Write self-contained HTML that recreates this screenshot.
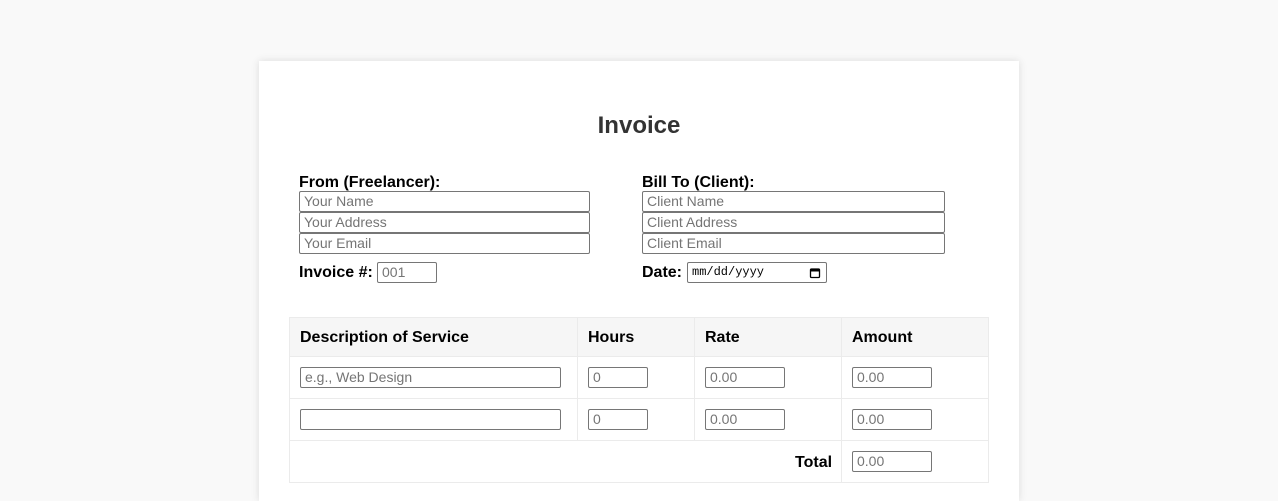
<!DOCTYPE html>
<html><head><style>
*{box-sizing:border-box;margin:0;padding:0}
html,body{width:1278px;height:501px;overflow:hidden}
body{background:#f9f9f9;font-family:"Liberation Sans",Arial,sans-serif;position:relative}
.card{position:absolute;left:259px;top:61px;width:760px;height:440px;background:#fff;box-shadow:0 0 8px rgba(0,0,0,0.12)}
.a{position:absolute}
h1{position:absolute;left:0;width:1278px;top:112px;text-align:center;font-size:24px;font-weight:bold;color:#333;line-height:28px}
.lbl{position:absolute;font-weight:bold;font-size:16px;color:#000;line-height:18px}
.in{position:absolute;height:21px;border:1px solid #767676;border-radius:2px;background:#fff;font-size:14px;color:#757575;padding-left:4px;line-height:19px;font-family:"Liberation Sans",Arial,sans-serif}
.cell{position:absolute;border:1px solid #ebebeb}
.th{position:absolute;font-weight:bold;font-size:16px;line-height:18px}
</style></head><body>
<div class="card"></div>
<h1>Invoice</h1>
<div class="lbl" style="left:299px;top:174px">From (Freelancer):</div>
<div class="lbl" style="left:642px;top:174px">Bill To (Client):</div>
<div class="in" style="left:299px;top:191px;width:291px">Your Name</div>
<div class="in" style="left:299px;top:212px;width:291px">Your Address</div>
<div class="in" style="left:299px;top:233px;width:291px">Your Email</div>
<div class="in" style="left:642px;top:191px;width:303px">Client Name</div>
<div class="in" style="left:642px;top:212px;width:303px">Client Address</div>
<div class="in" style="left:642px;top:233px;width:303px">Client Email</div>
<div class="lbl" style="left:299px;top:264px">Invoice #:</div>
<div class="in" style="left:377px;top:262px;width:60px">001</div>
<div class="lbl" style="left:642px;top:264px">Date:</div>
<div class="in" style="left:687px;top:262px;width:140px;color:#000;font-family:'Liberation Mono',monospace;font-size:12px">mm/dd/yyyy
<svg class="a" style="left:121px;top:4px" width="12" height="12" viewBox="0 0 12 12"><rect x="1.5" y="2" width="9" height="8.5" rx="1" fill="none" stroke="#000" stroke-width="1.3"/><rect x="1.5" y="2" width="9" height="2.5" fill="#000"/></svg></div>

<div class="cell" style="left:289px;top:317px;width:700px;height:40px;background:#f6f6f6"></div>
<div class="cell" style="left:289px;top:356px;width:700px;height:43px"></div>
<div class="cell" style="left:289px;top:398px;width:700px;height:43px"></div>
<div class="cell" style="left:289px;top:440px;width:700px;height:43px"></div>
<div class="a" style="left:577px;top:317px;width:1px;height:124px;background:#ebebeb"></div>
<div class="a" style="left:694px;top:317px;width:1px;height:124px;background:#ebebeb"></div>
<div class="a" style="left:841px;top:317px;width:1px;height:166px;background:#ebebeb"></div>
<div class="th" style="left:300px;top:329px">Description of Service</div>
<div class="th" style="left:588px;top:329px">Hours</div>
<div class="th" style="left:705px;top:329px">Rate</div>
<div class="th" style="left:852px;top:329px">Amount</div>
<div class="in" style="left:300px;top:367px;width:261px">e.g., Web Design</div>
<div class="in" style="left:588px;top:367px;width:60px">0</div>
<div class="in" style="left:705px;top:367px;width:80px">0.00</div>
<div class="in" style="left:852px;top:367px;width:80px">0.00</div>
<div class="in" style="left:300px;top:409px;width:261px"></div>
<div class="in" style="left:588px;top:409px;width:60px">0</div>
<div class="in" style="left:705px;top:409px;width:80px">0.00</div>
<div class="in" style="left:852px;top:409px;width:80px">0.00</div>
<div class="th" style="left:795px;top:454px">Total</div>
<div class="in" style="left:852px;top:451px;width:80px">0.00</div>
</body></html>
